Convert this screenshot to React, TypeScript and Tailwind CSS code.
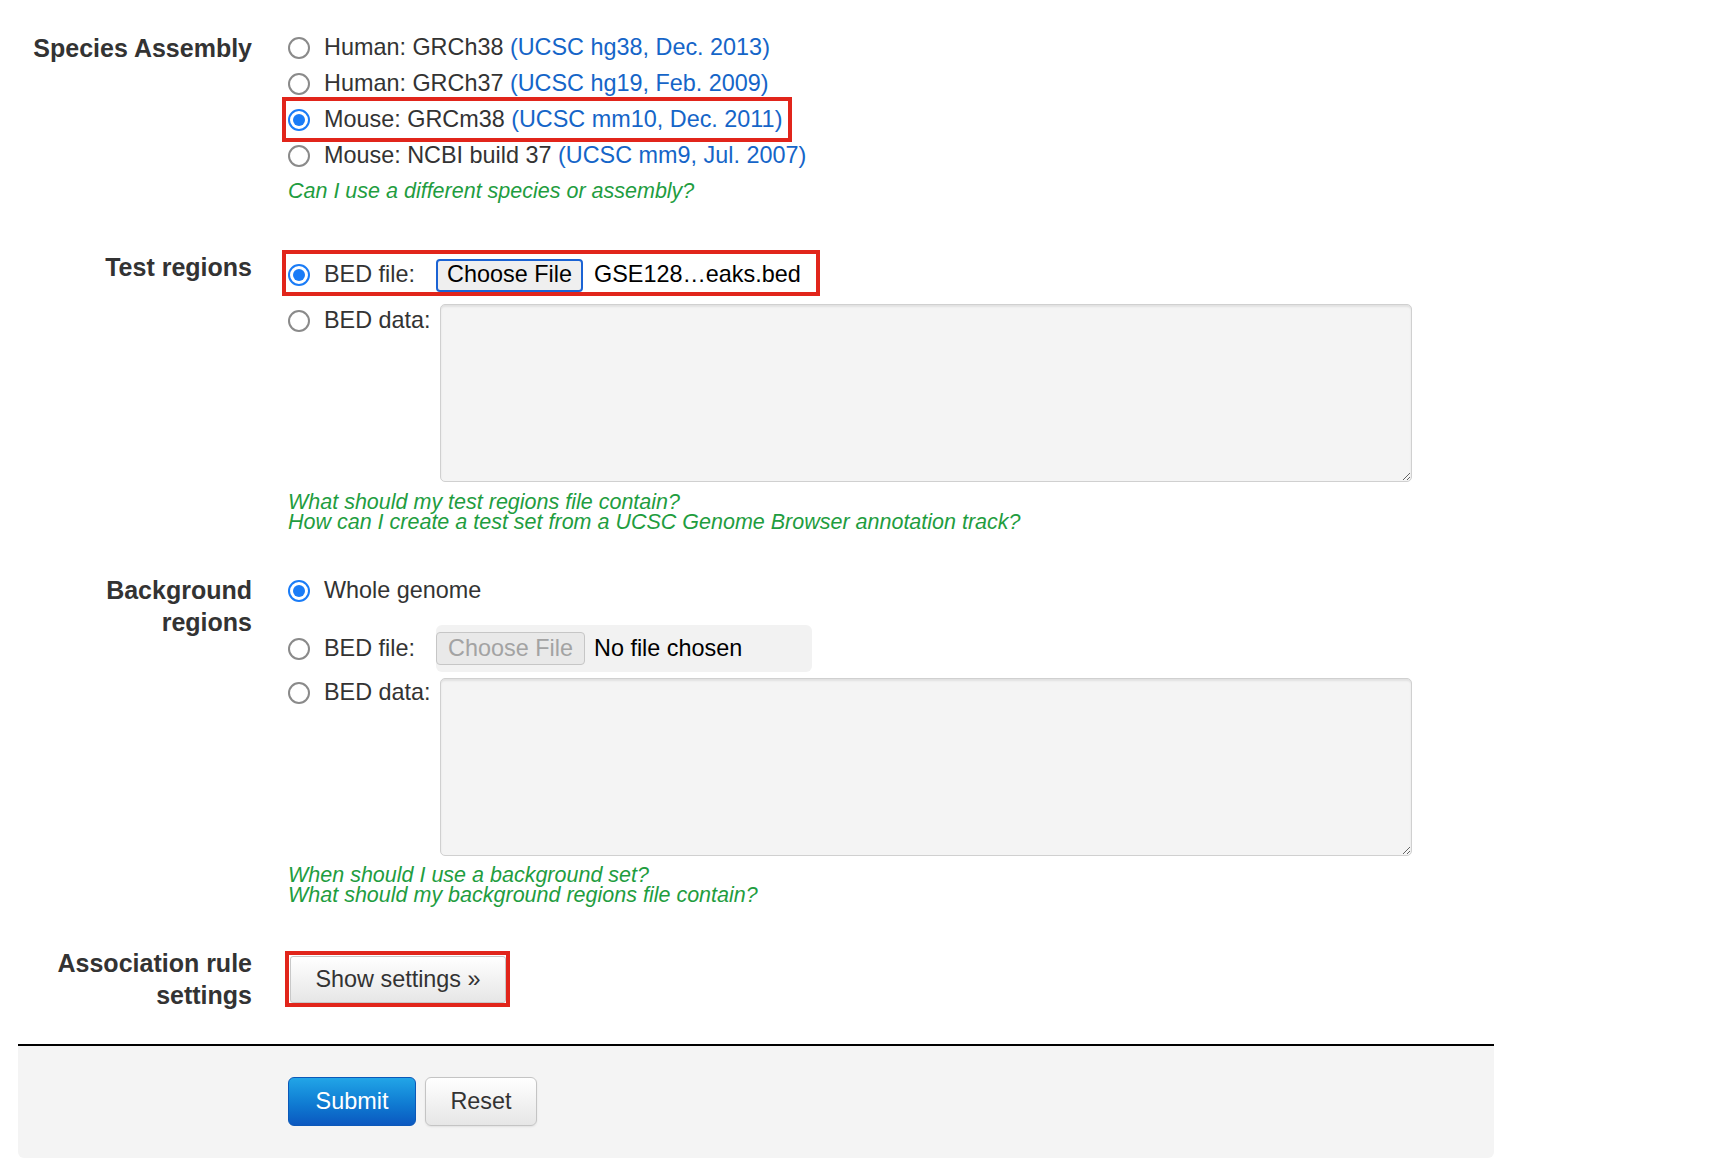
import React from "react";

function Radio({ checked = false }: { checked?: boolean }) {
  if (checked) {
    return (
      <span className="flex h-[22px] w-[22px] shrink-0 items-center justify-center rounded-full border-2 border-[#1a7cf7] bg-white">
        <span className="h-[12px] w-[12px] rounded-full bg-[#1a7cf7]" />
      </span>
    );
  }
  return <span className="h-[22px] w-[22px] shrink-0 rounded-full border-2 border-[#8a8a8a] bg-white" />;
}

function Label({ children, two = false }: { children: React.ReactNode; two?: boolean }) {
  return (
    <div
      className={`w-[252px] shrink-0 text-right text-[25px] font-bold text-[#333] ${
        two ? "mt-[1px] leading-[32px]" : "leading-[36px]"
      }`}
    >
      {children}
    </div>
  );
}

function A({ children }: { children: React.ReactNode }) {
  return <span className="text-[#1565c8]">{children}</span>;
}

function Help({ lines, className = "" }: { lines: string[]; className?: string }) {
  return (
    <div className={`text-[21.5px] italic leading-[20px] text-[#1f9d3f] ${className}`}>
      {lines.map((l) => (
        <div key={l}>{l}</div>
      ))}
    </div>
  );
}

function Option({ checked, children }: { checked?: boolean; children: React.ReactNode }) {
  return (
    <div className="flex h-[36px] w-fit items-center gap-[14px]">
      <Radio checked={checked} />
      <span className="whitespace-nowrap">{children}</span>
    </div>
  );
}

function RedBox({ className }: { className: string }) {
  return <span className={`pointer-events-none absolute border-4 border-[#e1251b] ${className}`} />;
}

function DataArea() {
  return (
    <textarea
      readOnly
      className="block h-[178px] w-[972px] rounded-[5px] border border-[#d0d0d0] bg-[#f4f4f4] shadow-[inset_0_2px_2px_rgba(0,0,0,0.08)] outline-none"
    />
  );
}

export default function App() {
  return (
    <div className="min-h-screen bg-white pt-[30px] font-['Liberation_Sans',Arial,sans-serif] text-[23.4px] text-[#333]">
      {/* Species assembly */}
      <div className="flex">
        <Label>Species Assembly</Label>
        <div className="ml-[36px]">
          <Option>
            Human: GRCh38 <A>(UCSC hg38, Dec. 2013)</A>
          </Option>
          <Option>
            Human: GRCh37 <A>(UCSC hg19, Feb. 2009)</A>
          </Option>
          <div className="relative flex h-[36px] w-fit items-center gap-[14px]">
            <Radio checked />
            <span className="whitespace-nowrap">
              Mouse: GRCm38 <A>(UCSC mm10, Dec. 2011)</A>
            </span>
            <RedBox className="top-[-5px] bottom-[-4px] left-[-6px] right-[-10px]" />
          </div>
          <Option>
            Mouse: NCBI build 37 <A>(UCSC mm9, Jul. 2007)</A>
          </Option>
          <Help className="mt-[7px]" lines={["Can I use a different species or assembly?"]} />
        </div>
      </div>

      {/* Test regions */}
      <div className="mt-[48px] flex">
        <Label>Test regions</Label>
        <div className="ml-[36px]">
          <div className="relative mt-[6px] flex h-[40px] w-fit items-center">
            <Radio checked />
            <span className="ml-[14px] w-[112px]">BED file:</span>
            <button className="h-[33px] w-[147px] rounded-[4px] border-2 border-[#1b63d4] bg-[#efefef] leading-none text-black">
              Choose File
            </button>
            <span className="ml-[11px] whitespace-nowrap text-black">GSE128…eaks.bed</span>
            <RedBox className="top-[-5px] bottom-[-1px] left-[-6px] right-[-19px]" />
          </div>
          <div className="mt-[9px] flex items-start">
            <div className="flex h-[34px] items-center">
              <Radio />
              <span className="ml-[14px] w-[116px]">BED data:</span>
            </div>
            <DataArea />
          </div>
          <Help
            className="mt-[10px]"
            lines={[
              "What should my test regions file contain?",
              "How can I create a test set from a UCSC Genome Browser annotation track?",
            ]}
          />
        </div>
      </div>

      {/* Background regions */}
      <div className="mt-[41px] flex">
        <Label two>
          Background
          <br />
          regions
        </Label>
        <div className="ml-[36px]">
          <Option checked>Whole genome</Option>
          <div className="mt-[16px] flex h-[47px] items-center">
            <Radio />
            <span className="ml-[14px] w-[112px]">BED file:</span>
            <div className="flex h-[47px] w-[376px] items-center rounded-[6px] bg-[#f2f2f2]">
              <button
                disabled
                className="h-[33px] w-[149px] rounded-[4px] border border-[#c6c6c6] bg-[#e9e9e9] leading-none text-[#a3a3a3]"
              >
                Choose File
              </button>
              <span className="ml-[9px] whitespace-nowrap text-black">No file chosen</span>
            </div>
          </div>
          <div className="mt-[6px] flex items-start">
            <div className="flex h-[30px] items-center">
              <Radio />
              <span className="ml-[14px] w-[116px]">BED data:</span>
            </div>
            <DataArea />
          </div>
          <Help
            className="mt-[9px]"
            lines={["When should I use a background set?", "What should my background regions file contain?"]}
          />
        </div>
      </div>

      {/* Association rule settings */}
      <div className="mt-[42px] flex">
        <div className="w-[252px] shrink-0 text-right text-[25px] font-bold leading-[32px] text-[#333]">
          Association rule
          <br />
          settings
        </div>
        <div className="ml-[36px]">
          <div className="relative ml-[2px] mt-[9px] w-fit">
            <button className="h-[47px] w-[216px] rounded-[3px] border border-[#c8c8c8] bg-linear-to-b from-white to-[#e6e6e6] text-[#333]">
              Show settings »
            </button>
            <RedBox className="top-[-5px] bottom-[-4px] left-[-5px] right-[-4px]" />
          </div>
        </div>
      </div>

      {/* Form actions */}
      <div className="ml-[18px] mt-[33px] flex h-[114px] w-[1476px] items-start rounded-b-[6px] border-t-2 border-black bg-[#f4f4f4] pl-[270px] pt-[31px]">
        <button className="h-[49px] w-[128px] rounded-[6px] border border-[#0b58b8] bg-linear-to-b from-[#22a5e7] to-[#0c58c0] text-white">
          Submit
        </button>
        <button className="ml-[9px] h-[49px] w-[112px] rounded-[6px] border border-[#c4c4c4] bg-linear-to-b from-white to-[#e6e6e6] text-[#333] shadow-[0_1px_2px_rgba(0,0,0,0.08)]">
          Reset
        </button>
      </div>
    </div>
  );
}
